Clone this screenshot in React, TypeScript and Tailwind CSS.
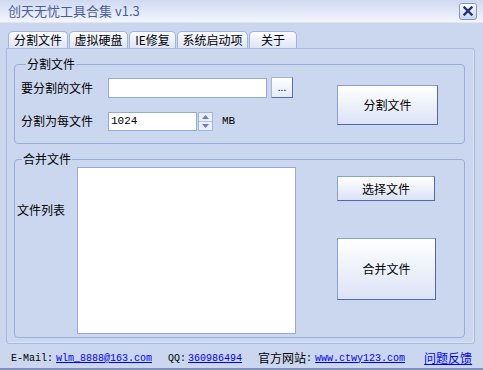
import React from "react";

const cjk = "font-['Noto_Sans_CJK_SC','Noto_Sans',sans-serif]";
const mono = "font-['Liberation_Mono','DejaVu_Sans_Mono',monospace]";

function Btn({ className, children }: { className: string; children: React.ReactNode }) {
  return (
    <div
      className={`flex items-center justify-center border border-[#8d9fd0] border-r-[#5467a6] border-b-[#5467a6] bg-gradient-to-b from-[#ffffff] to-[#dbe3f6] text-[12px] leading-[16px] text-black ${className}`}
    >
      {children}
    </div>
  );
}

function Tab({ label, w }: { label: string; w: string }) {
  return (
    <div
      className={`flex h-[17px] items-center justify-center rounded-t-[5px] border border-b-0 border-[#a3b3da] bg-gradient-to-b from-[#fbfcff] to-[#dde5f6] text-[12px] leading-[16px] text-black ${w}`}
    >
      {label}
    </div>
  );
}

export default function App() {
  return (
    <div className={`flex h-[370px] w-[483px] flex-col overflow-hidden bg-[#cbd7ef] ${cjk}`}>
      {/* title bar */}
      <div className="flex h-[23px] shrink-0 items-center justify-between border-b border-[#dfe6f6] bg-gradient-to-b from-[#cfd9f1] to-[#f3f6fd] pl-[8px] pr-[6px]">
        <span className="text-[13px] leading-[16px] text-[#4a5c9a]">创天无忧工具合集 v1.3</span>
        <div className="flex h-[17px] w-[18px] items-center justify-center rounded-[3px] border border-[#8294c6] bg-gradient-to-b from-[#ffffff] to-[#c9d4ef]">
          <svg width="10" height="10" viewBox="0 0 10 10">
            <path d="M1.5 1.5 L8.5 8.5 M8.5 1.5 L1.5 8.5" stroke="#24366f" strokeWidth="2.4" strokeLinecap="square" />
          </svg>
        </div>
      </div>

      {/* tabs */}
      <div className="ml-[8px] mt-[8px] flex h-[17px] shrink-0 items-end gap-[1px]">
        <Tab label="分割文件" w="w-[60px]" />
        <Tab label="虚拟硬盘" w="w-[59px]" />
        <Tab label="IE修复" w="w-[47px]" />
        <Tab label="系统启动项" w="w-[71px]" />
        <Tab label="关于" w="w-[48px]" />
      </div>

      {/* panel */}
      <div className="ml-[6px] flex h-[296px] w-[469px] shrink-0 flex-col rounded-[3px] rounded-tl-none border border-[#a9b8de] px-[7px] pt-[7px] shadow-[inset_-1px_-1px_0_#dbe3f5]">
        {/* group 1 */}
        <fieldset className="h-[88px] w-[451px] rounded-[4px] border border-[#9bacd7] px-[6px]">
          <legend className="ml-[5px] px-[1px] text-[12px] leading-[16px] text-black">分割文件</legend>
          <div className="flex">
            <div className="flex w-[272px] flex-col pt-[5px]">
              <div className="flex h-[21px] items-center">
                <span className="w-[87px] text-[12px] leading-[16px] text-black">要分割的文件</span>
                <div className="h-[20px] w-[159px] border border-[#97a9d8] bg-white" />
                <div className="ml-[4px] flex h-[21px] w-[22px] items-center justify-center border border-[#a3b3dc] border-b-[#5b6da8] border-r-[#5b6da8] bg-gradient-to-b from-white to-[#e3e9f8] pb-[2px] text-[10px] leading-[10px] text-black">
                  ...
                </div>
              </div>
              <div className="mt-[13px] flex h-[20px] items-center">
                <span className="w-[87px] text-[12px] leading-[16px] text-black">分割为每文件</span>
                <div className={`flex h-[19px] w-[89px] items-center border border-[#97a9d8] bg-white pl-[2px] text-[11px] text-black ${mono}`}>
                  1024
                </div>
                <div className="ml-[1px] flex h-[19px] w-[15px] flex-col border border-[#a7b5da] bg-[#e9eef9]">
                  <div className="flex flex-1 items-center justify-center border-b border-[#b6c2e2]">
                    <svg width="7" height="4" viewBox="0 0 7 4">
                      <path d="M0 4 L3.5 0 L7 4 Z" fill="#6a7fc4" />
                    </svg>
                  </div>
                  <div className="flex flex-1 items-center justify-center">
                    <svg width="7" height="4" viewBox="0 0 7 4">
                      <path d="M0 0 L3.5 4 L7 0 Z" fill="#6a7fc4" />
                    </svg>
                  </div>
                </div>
                <span className={`ml-[9px] text-[11px] text-black ${mono}`}>MB</span>
              </div>
            </div>
            <Btn className="ml-[44px] mt-[13px] h-[40px] w-[101px]">分割文件</Btn>
          </div>
        </fieldset>

        {/* group 2 */}
        <fieldset className="mt-[7px] h-[187px] w-[451px] rounded-[4px] border border-[#9bacd7] pl-[2px]">
          <legend className="ml-[5px] px-[1px] text-[12px] leading-[16px] text-black">合并文件</legend>
          <div className="flex">
            <span className="mt-[35px] w-[60px] text-[12px] leading-[16px] text-black">文件列表</span>
            <div className="h-[167px] w-[219px] border border-[#97a9d8] bg-white" />
            <div className="ml-[41px] flex flex-col pt-[9px]">
              <Btn className="h-[25px] w-[98px]">选择文件</Btn>
              <Btn className="mt-[37px] h-[62px] w-[99px]">合并文件</Btn>
            </div>
          </div>
        </fieldset>
      </div>

      {/* footer */}
      <div className="flex h-[24px] shrink-0 items-center whitespace-nowrap pl-[11px] pt-[4px] text-black">
        <span className={`text-[10px] ${mono}`}>E-Mail:</span>
        <span className={`ml-[3px] text-[10px] text-[#0000ff] underline ${mono}`}>wlm_8888@163.com</span>
        <span className={`ml-[16px] text-[10px] ${mono}`}>QQ:</span>
        <span className={`ml-[2px] text-[10px] text-[#0000ff] underline ${mono}`}>360986494</span>
        <span className="ml-[16px] text-[12px] leading-[16px]">官方网站</span>
        <span className={`text-[10px] ${mono}`}>:</span>
        <span className={`ml-[3px] text-[10px] text-[#0000ff] underline ${mono}`}>www.ctwy123.com</span>
        <span className="ml-[19px] text-[12px] leading-[16px] text-[#0000ff] underline">问题反馈</span>
      </div>
      <div className="h-[2px] w-full shrink-0 bg-[#8391b8]" />
    </div>
  );
}
